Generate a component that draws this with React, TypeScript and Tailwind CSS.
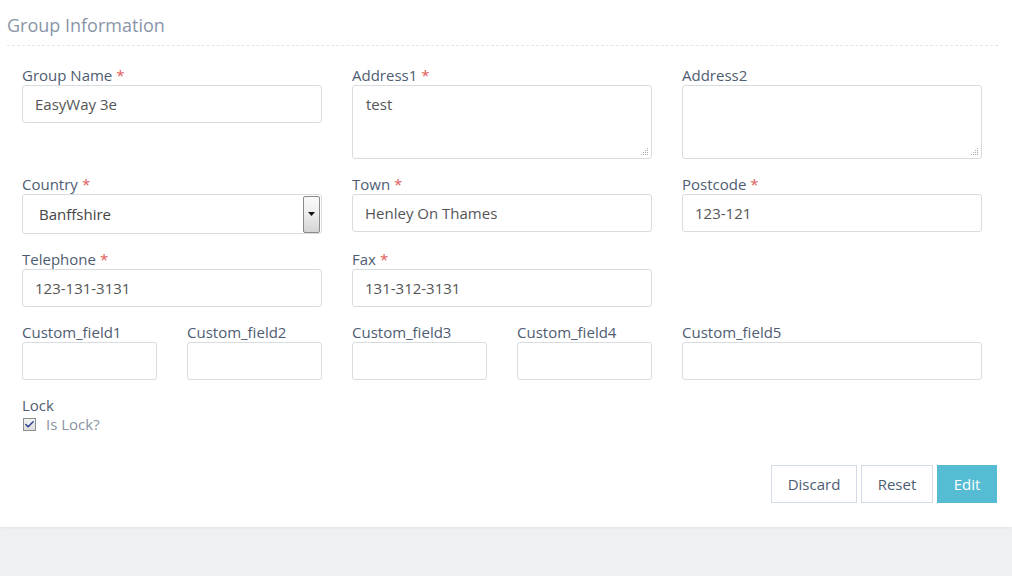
import { Check } from "lucide-react";

const font = { fontFamily: "'Open Sans', 'Liberation Sans', sans-serif" };

function Label({ text, required }: { text: string; required?: boolean }) {
  return (
    <div className="h-[19px] text-[15px] leading-[19px] text-[#4e5d72]">
      {text}
      {required && <span className="ml-[4px] text-[#e05b5b]">*</span>}
    </div>
  );
}

function TextInput({ value }: { value?: string }) {
  return (
    <div className="flex h-[38px] items-center rounded-[3px] border border-[#d9dcdf] bg-white px-[12px] text-[15px] text-[#555]">
      {value}
    </div>
  );
}

function TextArea({ value }: { value?: string }) {
  return (
    <div className="relative h-[74px] rounded-[3px] border border-[#d9dcdf] bg-white px-[13px] pt-[8px] text-[15px] leading-[20px] text-[#555]">
      {value}
      <svg className="absolute bottom-[2px] right-[2px]" width="9" height="9" viewBox="0 0 9 9">
        <rect x="7" y="1" width="1" height="1" fill="#aaa" />
        <rect x="5" y="3" width="1" height="1" fill="#aaa" />
        <rect x="7" y="3" width="1" height="1" fill="#aaa" />
        <rect x="3" y="5" width="1" height="1" fill="#aaa" />
        <rect x="5" y="5" width="1" height="1" fill="#aaa" />
        <rect x="7" y="5" width="1" height="1" fill="#aaa" />
        <rect x="1" y="7" width="1" height="1" fill="#aaa" />
        <rect x="3" y="7" width="1" height="1" fill="#aaa" />
        <rect x="5" y="7" width="1" height="1" fill="#aaa" />
        <rect x="7" y="7" width="1" height="1" fill="#aaa" />
      </svg>
    </div>
  );
}

function Select({ value }: { value: string }) {
  return (
    <div className="flex h-[40px] items-center rounded-[3px] border border-[#d9dcdf] bg-white pl-[16px] pr-[1px] text-[15px] text-[#444]">
      <span className="flex-1">{value}</span>
      <div className="flex h-[37px] w-[17px] items-center justify-center rounded-[2px] border border-[#8a8a8a] bg-gradient-to-b from-[#fafafa] via-[#ececec] to-[#d4d4d4]">
        <svg width="7" height="4" viewBox="0 0 7 4">
          <path d="M0 0h7L3.5 4z" fill="#111" />
        </svg>
      </div>
    </div>
  );
}

function Field({ label, required, children }: { label: string; required?: boolean; children?: React.ReactNode }) {
  return (
    <div className="mb-[16px]">
      <Label text={label} required={required} />
      {children}
    </div>
  );
}

export default function App() {
  return (
    <div className="min-h-[576px] bg-[#eef1f4]" style={font}>
      <div className="h-[527px] bg-white px-[7px] shadow-[0_1px_2px_rgba(0,0,0,0.05)]">
        <div className="pt-[13px] text-[18px] leading-[24px] text-[#8a96a8]">Group Information</div>
        <div className="mt-[8px] mr-[7px] border-t border-dashed border-[#e3e6ea]" />

        <div className="w-[990px] px-[15px] pt-[20px]">
          <div className="grid grid-cols-3 gap-x-[30px]">
            <Field label="Group Name" required>
              <TextInput value="EasyWay 3e" />
            </Field>
            <Field label="Address1" required>
              <TextArea value="test" />
            </Field>
            <Field label="Address2">
              <TextArea />
            </Field>

            <Field label="Country" required>
              <Select value="Banffshire" />
            </Field>
            <Field label="Town" required>
              <TextInput value="Henley On Thames" />
            </Field>
            <Field label="Postcode" required>
              <TextInput value="123-121" />
            </Field>

            <Field label="Telephone" required>
              <TextInput value="123-131-3131" />
            </Field>
            <Field label="Fax" required>
              <TextInput value="131-312-3131" />
            </Field>
            <div />

            <div className="grid grid-cols-2 gap-x-[30px]">
              <Field label="Custom_field1">
                <TextInput />
              </Field>
              <Field label="Custom_field2">
                <TextInput />
              </Field>
            </div>
            <div className="grid grid-cols-2 gap-x-[30px]">
              <Field label="Custom_field3">
                <TextInput />
              </Field>
              <Field label="Custom_field4">
                <TextInput />
              </Field>
            </div>
            <Field label="Custom_field5">
              <TextInput />
            </Field>
          </div>

          <div>
            <Label text="Lock" />
            <label className="flex h-[18px] items-center gap-[10px] text-[15px] text-[#8a93a0]">
              <span className="ml-[1px] flex h-[13px] w-[13px] items-center justify-center border border-[#8e8f8f] bg-gradient-to-b from-[#f2f2f2] to-[#dcdcdc]">
                <Check size={11} strokeWidth={3} className="text-[#2a3c8f]" />
              </span>
              Is Lock?
            </label>
          </div>
        </div>

        <div className="mt-[32px] flex justify-end gap-[4px] pr-[8px]">
          <button className="h-[38px] w-[86px] border border-[#d3dbe5] bg-white text-[15px] text-[#4e5d72]">Discard</button>
          <button className="h-[38px] w-[72px] border border-[#d3dbe5] bg-white text-[15px] text-[#4e5d72]">Reset</button>
          <button className="h-[38px] w-[60px] bg-[#55bcd3] text-[15px] text-white">Edit</button>
        </div>
      </div>
    </div>
  );
}
